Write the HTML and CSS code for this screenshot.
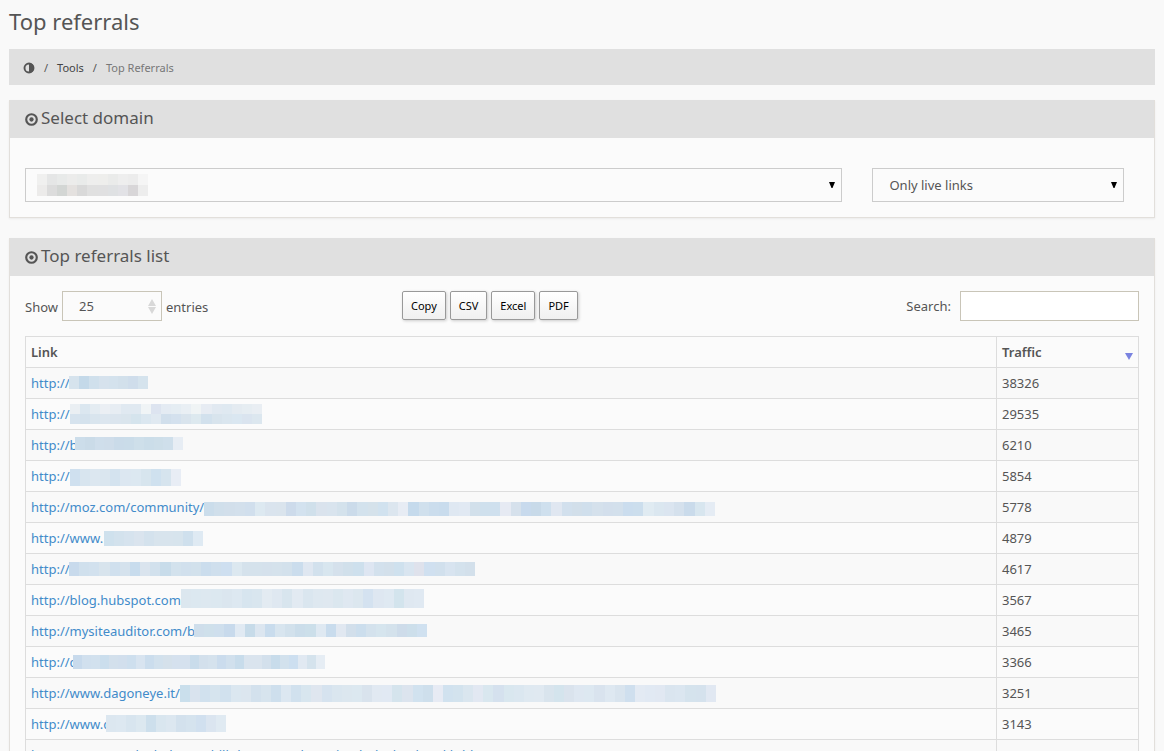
FILE: index.html
```html
<!DOCTYPE html>
<html lang="en">
<head>
<meta charset="utf-8">
<title>Top referrals</title>
<link rel="stylesheet" href="styles.css">
</head>
<body>
<main class="page">
  <h1 class="page-title">Top referrals</h1>
  <nav class="breadcrumb" aria-label="Breadcrumb">
    <a href="#" aria-label="Home"><svg class="crumb-icon" viewBox="0 0 12 12"><circle cx="6" cy="6" r="4.500" fill="none" stroke="currentColor" stroke-width="1.900"/><path d="M6 1a5 5 0 0 1 0 10z" fill="currentColor"/></svg></a>
    <span>/</span><a href="#">Tools</a><span>/</span><span class="current">Top Referrals</span>
  </nav>

  <section class="card">
    <h2 class="card-title"><svg class="title-icon" viewBox="0 0 14 14"><circle cx="7" cy="7" r="5.700" fill="none" stroke="currentColor" stroke-width="2.300"/><circle cx="7" cy="7" r="2.300" fill="currentColor"/></svg>Select domain</h2>
    <div class="filters">
      <div class="select-wrap">
        <select class="select" aria-label="Domain"><option></option></select>
        <span class="mask domain-mask" data-rows="f0f0ef e5e6e6 e8eae9 ececeb e9ebea eeeeed eeeeec eaebea eeeeee ececec f5f5f5|ecebea dcdcdc d3d6d4 e4e1df d9d9d9 e0e0e0 e0e0e1 dfe1e3 e2e2e6 d8d6d8 ededed"></span>
        <svg class="arrow" viewBox="0 0 6 7"><path d="M0 0h6L3.500 6h-1z"/></svg>
      </div>
      <div class="select-wrap">
        <select class="select" aria-label="Link status"><option>Only live links</option></select>
        <svg class="arrow" viewBox="0 0 6 7"><path d="M0 0h6L3.500 6h-1z"/></svg>
      </div>
    </div>
  </section>

  <section class="card">
    <h2 class="card-title"><svg class="title-icon" viewBox="0 0 14 14"><circle cx="7" cy="7" r="5.700" fill="none" stroke="currentColor" stroke-width="2.300"/><circle cx="7" cy="7" r="2.300" fill="currentColor"/></svg>Top referrals list</h2>
    <div class="list">
      <div class="toolbar">
        <div class="length">
          <label for="length">Show</label>
          <span class="select-wrap"><select id="length" class="select small"><option>25</option></select><svg class="sorter" viewBox="0 0 8 15"><path d="M0 7l4-7 4 7zM0 8h8l-4 7z"/></svg></span>
          <span>entries</span>
        </div>
        <div class="exports"><button>Copy</button><button>CSV</button><button>Excel</button><button>PDF</button></div>
        <div class="search"><label for="search">Search:</label><input id="search" type="text"></div>
      </div>
      <table class="table">
        <thead><tr><th scope="col">Link</th><th scope="col" class="traffic"><div class="sorted">Traffic<svg class="desc" viewBox="0 0 8 7"><path d="M0 0h8L4 7z"/></svg></div></th></tr></thead>
        <tbody id="rows"></tbody>
      </table>
    </div>
  </section>
</main>
<script src="app.js"></script>
</body>
</html>
```
FILE: styles.css
```css
* { box-sizing: border-box; }
body { margin: 0; background: #f9f9f9; color: #555; font: 13px/20px "Noto Sans", sans-serif; }
.page { padding: 6px 9px 20px; }
.page-title { margin: 0 0 13px; font-size: 22px; line-height: 30px; font-weight: 400; }
a { color: #428bca; text-decoration: none; }
.breadcrumb { display: flex; align-items: center; gap: 9px; height: 36px; margin-bottom: 15px; padding: 2px 14px 0; background: #e0e0e0; font-size: 11px; }
.breadcrumb a { color: #444; }
.breadcrumb .current { color: #777; }
.crumb-icon { display: block; width: 12px; height: 12px; color: #555; }
.card { margin-bottom: 20px; border: 1px solid #e2dfdb; border-top: 0; background: #fbfbfb; box-shadow: 0 1px 2px rgba(0, 0, 0, .06); }
.card-title { display: flex; align-items: center; gap: 3px; height: 38px; margin: 0; padding: 0 15px 2px; background: #e0e0e0; font-size: 17px; font-weight: 400; }
.title-icon { width: 13px; height: 13px; margin-top: 2px; }
.filters { display: grid; grid-template-columns: 13fr 4fr; gap: 30px; padding: 30px 30px 15px 15px; }
.select-wrap { position: relative; display: block; }
.select { appearance: none; display: block; width: 100%; height: 34px; margin: 0; padding: 0 16px; border: 1px solid #ccc; border-radius: 0; background: #fbfbfb; color: #555; font: inherit; }
.arrow { position: absolute; right: 7px; top: 14px; width: 6px; height: 7px; pointer-events: none; }
.select.small { width: 100px; height: 30px; border-color: #c9c5b8; }
.sorter { position: absolute; right: 6px; top: 8px; width: 8px; height: 15px; fill: #d8d8d8; pointer-events: none; }
.list { padding: 15px; }
.toolbar { display: grid; grid-template-columns: 377px 1fr auto; margin-bottom: 15px; }
.length { display: flex; align-items: center; gap: 4px; }
.length > label, .length > span:last-child { padding-top: 2px; }
.exports { display: flex; gap: 4px; }
.exports button { height: 29px; padding: 0 8px; border: 1px solid #999; border-radius: 2px; background: linear-gradient(#fff, #f0f0f0); box-shadow: 1px 1px 3px #ccc; color: #000; font: 11px "Noto Sans", sans-serif; }
.search { display: flex; align-items: center; gap: 9px; }
.search input { width: 179px; height: 30px; padding: 0 8px; border: 1px solid #c9c5b8; background: #fff; font: inherit; }
.table { width: 100%; border-collapse: collapse; table-layout: fixed; }
.table th, .table td { height: 31px; padding: 5px; border: 1px solid #ddd; text-align: left; }
.table th { font-weight: 600; }
.table tbody tr:nth-child(odd) { background: #f9f9f9; }
.traffic { width: 142px; }
.sorted { display: flex; justify-content: space-between; align-items: center; }
.desc { width: 8px; height: 7px; margin-top: 8px; fill: #7a83e0; }
.link { position: relative; display: block; white-space: nowrap; }
.mask { position: absolute; display: flex; flex-direction: column; pointer-events: none; }
.mask-row { display: flex; flex: 1; }
.mask-row i { flex: 1; }
.domain-mask { left: 12px; top: 6px; width: 111px; height: 22px; }
```
FILE: app.js
```js
// Mask geometry: left and top inside the link, width, height, then cell colours by row.
const rows = [
  ["http://", 38326, 38, 3, 79, 13, "d6e3ed c4d9e9 d0e0ec d6e2ed d4e2ed d2e0eb cfddeb d5e3ed"],
  ["http://", 29535, 39, 0, 192, 20, "eaeff3 dbe7f0 e4ecf2 ebeff4 e7edf3 e0e9f1 e0e9f1 f0f4f6 dde4f0 e4ebf3 e5edf3 e9eff4 f0f4f5 e7ecf3 e1e9f1 dfe9f1 e4ebf1 e6edf2 e9eef3|d6e3ee d4e2ed d9e5ee dce6ef dbe5ee dae5ed d5e4ed dbe7f0 e0e9f1 d1dfec d4e1ee d9e4ed dde9ef d2e1ed d8e4ed dae6ef dae7f1 dae4ef dce7ef"],
  ["http://b", 6210, 44, 2, 108, 13, "ccddea cadbe8 cfdeeb cfddea cadbe9 cadce9 cedfea cbdde9 cddee9 cfdfeb e7edf4"],
  ["http://", 5854, 39, 3, 111, 17, "cfe0ef d8e5ef dce7f0 dae6ef d4e3ef dce7f1 dce8f1 d7e5ee cfe1ef d6e4ee e8edf5"],
  ["http://moz.com/community/", 5778, 173, 5, 511, 14, "cbddeb d0dfeb d2dfeb d3e0ec d1dfed dde9f1 dae4ee dae4ed cddbeb d3e2ef d0e0eb dae3ed d9e4ee d4e2ec cbdbea d3e2ed d5e2eb d1e2ef dce6ef e7ecf4 c5daec d0e0ed cbdded c9dced dfe8f2 e1e9f3 d2e0eb cfe0ed cfe0ee e6eaf3 d6e1ec c8daed c8dae9 cfe0ee e0e7f1 d2e0ed d2dfea d0dfec d5e1ec d3dfec d3e0ec cbddee ccdeed e0ebf2 dbe7f0 dbe5f0 d5e1ed cadbeb d8e6ef e5ecf4"],
  ["http://www.", 4879, 73, 3, 99, 15, "cfe1ed d3e2ed d6e3ee dae4ee d4e2ed d8e4ed d8e4ed d7e4ed cfe0ed dfeaf3"],
  ["http://", 4617, 38, 3, 406, 14, "c8daec d0e0ed d2e1ee d8e4ed d0e0ee d5e2ed c8dced dae4ee d2e1ed c8dcea d3e2ed d1e0ed d2e1ec cbdded cfdfed cedff0 dce8f0 d5e2ec d5e2ec d5e1ec d5e2ec d3e1ec cbdded dfe7f1 d2e1ed d8e6ef d5e1ec d1e0eb cee0ed dee6f2 d3e1ed d3e0eb cfe1ee d9e5f0 dfe2ec d0e0f0 d1e0ed d8e4f0 d4e2ed d3e0eb"],
  ["http://blog.hubspot.com,", 3567, 150, -1, 243, 19, "dce7ef dce8f0 dde8f0 dce8f0 dbe6ef dde8f1 d7e5ef d9e6ef e3ebf2 dfe8f1 d8e5ee e2eaf2 dae6ef dee8f0 dfe8f0 dbe7ef dfe8f1 dce7ef d4e2f0 dee7f1 dfe9f2 d3e4ed dfe8f1 e0e9f2"],
  ["http://mysiteauditor.com/b", 3465, 163, 3, 233, 13, "cfdeeb cfe0eb cfdfed c8daec e1eaf3 c7dbe9 dce6f0 c9dced d8e5ef d2e1ec cbddea ccdfea dfe9f2 c9dced e1e8f1 d2dfeb ccdeed d4e2ed d6e5ee d4e2ec cedcea cddfeb d0e1f0"],
  ["http://c", 3366, 42, 3, 252, 14, "c8daec d1e0ee d2e1ee cbdeed d3e0ec d2dfed cedfee d8e4f0 cbdded d2e1ed d5e1eb d5e1ee d5e1ee c9dceb d3e0ec d5e2ed cbdced d1e0ed c8dceb dae4ee dae4ee d3e0ec c8dceb d2e1ed cddff0 e1e9f2 d5e3ed e6edf4"],
  ["http://www.dagoneye.it/", 3251, 149, 2, 536, 17, "cadfec d9e3ee d1e1ee d6e4ee d1e1ee dbe7f0 dce6ef d3e1ed d7e4ee cedfed dce7f1 d1e1ee d8e6ef dfe6ef d6e3ef dae6ef dce7ef dce8f0 d9e3ed e1e9f2 e1e9f3 d5e4ed dce4ee d1e2ef cedfec e7ebf4 d1e2ef d3e3ee dae6ef e2e8f2 d9e7ef d5e1ee d9e7ef dbe7f0 dfe9f1 e0e9f1 d9e4ed d4e4ed dae3ed dee7f1 dde8f1 d9e3ee dee8f1 d9e4ee cfdfee e3eaf3 e1e9f3 e1e8f2 dae5ef dbe6f0 d5e3ed d5e2ed e1e8f2"],
  ["http://www.c", 3143, 75, 1, 120, 17, "dce7f0 dde8f1 d8e5ef dce8f0 cddfec d9e6ef dce7f0 d3e1ed d5e3ee d1e0ef dbe5f0 e0eaf2"],
  ["http://www.search-chak.com/bilk/kom-search-engine-hub.chael/rockh-blog/tag/158435", 3125]
];

function paint(mask, spec) {
  for (const line of spec.split("|")) {
    const row = document.createElement("span");
    row.className = "mask-row";
    for (const color of line.split(" ")) {
      const cell = document.createElement("i");
      cell.style.background = "#" + color;
      row.append(cell);
    }
    mask.append(row);
  }
}

for (const [url, traffic, left, top, width, height, colors] of rows) {
  const tr = document.getElementById("rows").insertRow();
  const wrap = document.createElement("span");
  wrap.className = "link";
  const link = document.createElement("a");
  link.href = "#";
  link.textContent = url;
  wrap.append(link);
  if (colors) {
    const mask = document.createElement("span");
    mask.className = "mask";
    Object.assign(mask.style, { left: left + "px", top: top + "px", width: width + "px", height: height + "px" });
    paint(mask, colors);
    wrap.append(mask);
  }
  tr.insertCell().append(wrap);
  tr.insertCell().textContent = traffic;
}
document.querySelectorAll("[data-rows]").forEach(m => paint(m, m.dataset.rows));
```
